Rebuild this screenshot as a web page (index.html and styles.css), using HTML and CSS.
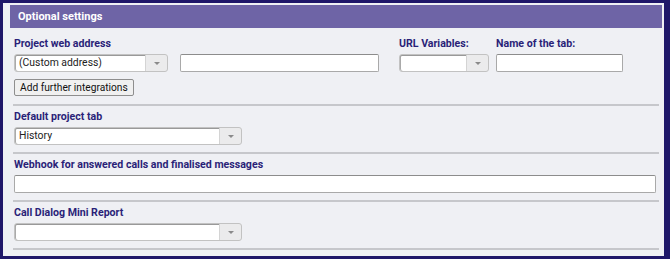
FILE: index.html
```html
<!DOCTYPE html>
<html>
<head>
    <title>Optional settings</title>
    <link rel="stylesheet" href="styles.css">
</head>
<body>
    <div class="frame">
        <div class="panel">
            <div class="header">Optional settings</div>

            <div class="section first">
                <div class="fields">
                    <div class="group">
                        <div class="label">Project web address</div>
                        <div class="controls">
                            <div class="select w-address"><span class="value">(Custom address)</span><span class="arrow"></span></div>
                            <div class="input w-url"></div>
                        </div>
                    </div>
                    <div class="group url-vars">
                        <div class="label">URL Variables:</div>
                        <div class="select w-vars"><span class="value"></span><span class="arrow"></span></div>
                    </div>
                    <div class="group tab-name">
                        <div class="label">Name of the tab:</div>
                        <div class="input w-tab"></div>
                    </div>
                </div>
                <button class="btn">Add further integrations</button>
            </div>

            <div class="section">
                <div class="label">Default project tab</div>
                <div class="select w-wide"><span class="value">History</span><span class="arrow"></span></div>
            </div>

            <div class="section">
                <div class="label">Webhook for answered calls and finalised messages</div>
                <div class="input w-full"></div>
            </div>

            <div class="section">
                <div class="label">Call Dialog Mini Report</div>
                <div class="select w-wide"><span class="value"></span><span class="arrow"></span></div>
            </div>
        </div>
    </div>
</body>
</html>
```

FILE: styles.css
```css
body {
    margin: 0;
    font-family: Roboto, "Liberation Sans", Arial, sans-serif;
    font-size: 10.6px;
}

.frame {
    background-color: #1f1769;
    padding: 3px 6px 3px 3px;
    height: 259px;
    box-sizing: border-box;
}

.panel {
    background-color: #eff0f4;
    height: 253px;
    padding: 2px 2px 0 7px;
    box-sizing: border-box;
}

.header {
    background-color: #6e64a6;
    color: white;
    font-weight: bold;
    font-size: 11px;
    height: 23px;
    line-height: 23px;
    padding-left: 8px;
}

.section {
    margin: 0 3px 0 3px;
    padding: 4px 1px 7px 1px;
    border-bottom: 2px solid #c6c7cb;
}

.section.first {
    padding-top: 9px;
    padding-bottom: 8px;
}

.label {
    color: #2a1f78;
    font-weight: bold;
    line-height: 14px;
    margin-bottom: 3px;
    white-space: nowrap;
}

.fields {
    display: flex;
}

.controls {
    display: flex;
    gap: 12px;
}

.url-vars {
    margin-left: 20px;
}

.tab-name {
    margin-left: 7px;
}

.input {
    height: 18px;
    box-sizing: border-box;
    background-color: white;
    border: 1px solid #a9a9a9;
    border-top-color: #8c8c8c;
    border-radius: 2px;
}

.select {
    display: flex;
    height: 18px;
    box-sizing: border-box;
    border: 1px solid #c2c2c2;
    border-radius: 3px;
    background-color: #ebebec;
}

.select .value {
    flex: 1;
    background-color: white;
    border-right: 1px solid #d4d4d4;
    border-radius: 2px 0 0 2px;
    box-shadow: inset 0 1px 0 #999, inset 1px 0 0 #aaa;
    padding-left: 4px;
    line-height: 16px;
    font-size: 10.4px;
    color: #222;
}

.select .arrow {
    width: 21px;
    position: relative;
}

.select .arrow::after {
    content: "";
    position: absolute;
    left: 8px;
    top: 7px;
    border-left: 3px solid transparent;
    border-right: 3px solid transparent;
    border-top: 3px solid #8a8a8a;
}

.w-address { width: 154px; }
.w-url { width: 199px; }
.w-vars { width: 90px; }
.w-tab { width: 127px; }
.w-wide { width: 228px; }
.w-full { width: 642px; }

.btn {
    display: block;
    margin-top: 7px;
    height: 17px;
    padding: 0 5px;
    font-family: Roboto, "Liberation Sans", Arial, sans-serif;
    font-size: 10.2px;
    color: #111;
    background-color: #f0f0f0;
    border: 1px solid #8e8e8e;
    border-radius: 2px;
    line-height: 14px;
}
```
